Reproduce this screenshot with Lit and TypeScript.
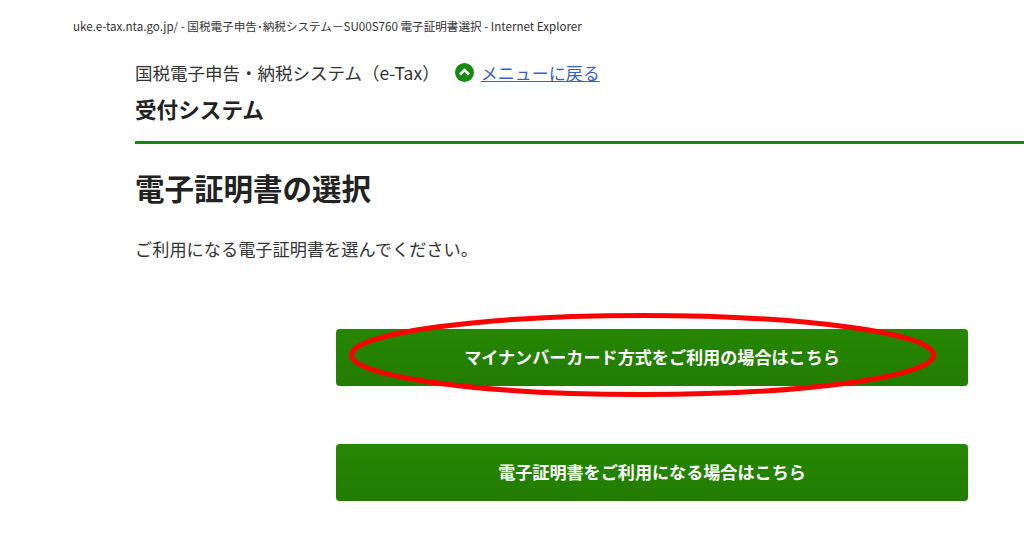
import { LitElement, html, css } from 'lit';
import { customElement } from 'lit/decorators.js';

@customElement('app-root')
export class AppRoot extends LitElement {
  static styles = css`
    :host {
      display: block;
      position: relative;
      width: 1024px;
      height: 534px;
      overflow: hidden;
      background: #fff;
      color: #222;
      font-family: "Noto Sans CJK JP", "Noto Sans", sans-serif;
    }

    .titlebar {
      margin-left: 73px;
      padding-top: 17px;
      height: 18px;
      line-height: 18px;
      font-size: 11.6px;
      color: #333;
      white-space: nowrap;
    }

    .main {
      margin-left: 135px;
    }

    .system {
      display: flex;
      align-items: center;
      height: 30px;
      margin-top: 22px;
      font-size: 17.5px;
      color: #333;
    }

    .back {
      display: flex;
      align-items: center;
      gap: 7px;
      margin-left: 15px;
      color: #3a5fcd;
      font-size: 17px;
      text-decoration: underline;
    }

    .back svg {
      display: block;
    }

    .sub {
      margin-top: 6px;
      height: 32px;
      line-height: 32px;
      font-size: 21.6px;
      font-weight: 700;
    }

    .rule {
      height: 3px;
      margin-top: 16px;
      background: #118a11;
    }

    h1 {
      margin: 21px 0 0;
      height: 44px;
      line-height: 44px;
      font-size: 29.5px;
      font-weight: 700;
    }

    .lead {
      margin: 27px 0 0;
      height: 26px;
      line-height: 26px;
      font-size: 17.2px;
      color: #333;
    }

    .buttons {
      display: flex;
      flex-direction: column;
      gap: 58px;
      width: 632px;
      margin: 67px 0 0 201px;
    }

    .btn {
      display: flex;
      align-items: center;
      justify-content: center;
      height: 57px;
      padding-bottom: 2px;
      box-sizing: border-box;
      border-radius: 4px;
      background: linear-gradient(#268602, #227c02);
      box-shadow: 0 0 1px #8ab57a;
      color: #fff;
      font-size: 17.1px;
      font-weight: 700;
    }

    .circle {
      position: absolute;
      left: 0;
      top: 0;
      pointer-events: none;
    }
  `;

  render() {
    return html`
      <div class="titlebar">uke.e-tax.nta.go.jp/ - 国税電子申告･納税システム－SU00S760 電子証明書選択 - Internet Explorer</div>
      <div class="main">
        <div class="system">
          <span>国税電子申告・納税システム（e-Tax）</span>
          <span class="back">
            <svg width="19" height="19" viewBox="0 0 19 19">
              <circle cx="9.5" cy="9.5" r="9.5" fill="#178a12"></circle>
              <path d="M5 11.5l4.5-4.5 4.5 4.5" fill="none" stroke="#fff" stroke-width="2.6"></path>
            </svg>
            <span>メニューに戻る</span>
          </span>
        </div>
        <div class="sub">受付システム</div>
        <div class="rule"></div>
        <h1>電子証明書の選択</h1>
        <p class="lead">ご利用になる電子証明書を選んでください。</p>
        <div class="buttons">
          <div class="btn">マイナンバーカード方式をご利用の場合はこちら</div>
          <div class="btn">電子証明書をご利用になる場合はこちら</div>
        </div>
      </div>
      <svg class="circle" width="1024" height="534">
        <ellipse cx="642.5" cy="355" rx="291" ry="39.5" fill="none" stroke="#ff0000" stroke-width="5"></ellipse>
      </svg>
    `;
  }
}
